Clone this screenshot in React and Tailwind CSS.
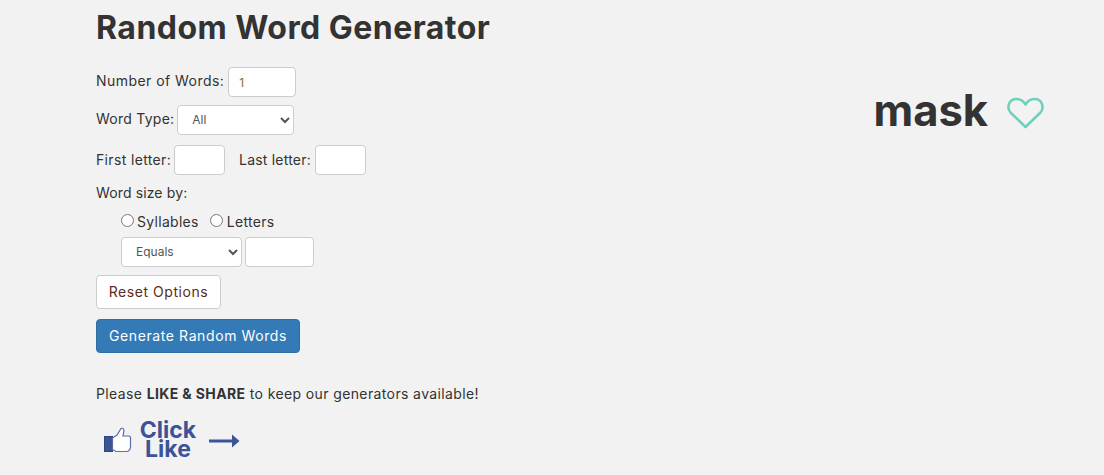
const font = "font-['Inter','Liberation_Sans',sans-serif]";
const field = "h-[30px] bg-white border border-[#ccc] rounded-[4px] text-[12px] text-[#555] outline-none";

function Thumb() {
  return (
    <svg width="28" height="26" viewBox="0 0 28 26">
      <rect x="0.5" y="9.5" width="8" height="15" fill="#3b5397" stroke="#2f4580" />
      <path d="M8.5 11 L13 8 L17 1.5 Q19.5 0.5 20 3.5 L19 9 L25 9 Q27 9.5 26.5 12 L26.5 20 Q26 24 23 24.5 L12 24.5 L8.5 22.5 Z" fill="#fff" stroke="#5b6ea8" strokeWidth="1.2" />
    </svg>
  );
}

export default function App() {
  return (
    <div className={`${font} h-[475px] overflow-hidden bg-[#f2f2f2] text-[#333] text-[14px] pl-[96px] pr-[60px] flex justify-between`}>
      <div className="flex flex-col items-start">
        <h1 className="mt-[11px] text-[32px] leading-[34px] font-bold tracking-[0.47px] text-[#333] whitespace-nowrap">Random Word Generator</h1>
        <div className="mt-[22px] flex items-center gap-[4px] h-[30px]">
          <span className="-translate-y-[2px] tracking-[0.45px]">Number of Words:</span>
          <input defaultValue="1" className={`${field} w-[68px] pl-[10px] !text-[#8a6d3b]`} />
        </div>
        <div className="mt-[8px] flex items-center gap-[3px] h-[30px]">
          <span className="-translate-y-[2px] tracking-[0.25px]">Word Type:</span>
          <select defaultValue="All" className={`${field} w-[117px] pl-[10px] pb-[2px]`}><option>All</option></select>
        </div>
        <div className="mt-[10px] flex items-center h-[30px]">
          <span className="-translate-y-[1px] tracking-[0.35px]">First letter:</span>
          <input className={`${field} w-[51px] ml-[3px]`} />
          <span className="ml-[14px] -translate-y-[1px] tracking-[0.2px]">Last letter:</span>
          <input className={`${field} w-[51px] ml-[4px]`} />
        </div>
        <div className="mt-[8px] leading-[20px] tracking-[0.13px]">Word size by:</div>
        <div className="mt-[8px] ml-[25px] flex items-center h-[20px] tracking-[0.3px]">
          <input type="radio" name="s" className="w-[13px] h-[13px] m-0 -translate-y-[1px]" />
          <span className="ml-[3px]">Syllables</span>
          <input type="radio" name="s" className="w-[13px] h-[13px] m-0 ml-[11px] -translate-y-[1px]" />
          <span className="ml-[4px]">Letters</span>
        </div>
        <div className="mt-[6px] ml-[25px] flex items-center gap-[3px]">
          <select defaultValue="Equals" className={`${field} w-[121px] pl-[10px] pb-[2px]`}><option>Equals</option></select>
          <input className={`${field} w-[69px]`} />
        </div>
        <button className="mt-[8px] h-[34px] w-[125px] bg-white border border-[#ccc] rounded-[4px] text-[#5c2a20] tracking-[0.55px] pb-[2px]">Reset Options</button>
        <button className="mt-[10px] h-[34px] w-[204px] bg-[#337ab7] border border-[#2e6da4] rounded-[4px] text-white tracking-[0.6px] pb-[2px]">Generate Random Words</button>
        <p className="mt-[31px] leading-[20px] tracking-[0.38px] whitespace-nowrap">Please <b className="font-bold">LIKE &amp; SHARE</b> to keep our generators available!</p>
        <div className="mt-[17px] ml-[8px] flex items-center text-[#3b5397]">
          <Thumb />
          <div className="ml-[7px] w-[58px] text-center text-[23px] leading-[19px] font-bold">Click<br />Like</div>
          <svg className="ml-[12px] mt-[1px]" width="31" height="16" viewBox="0 0 31 16">
            <path d="M0 6.5h23V9.5H0z M23 1.5 L30.5 8 L23 14.5 Z" fill="#3b5397" />
          </svg>
        </div>
      </div>
      <div className="mt-[87px] flex items-center h-[46px]">
        <span className="text-[43.5px] leading-[46px] font-bold text-[#333]">mask</span>
        <svg className="ml-[19px] mt-[6px]" width="37" height="32" viewBox="0 0 37 32" fill="none">
          <path d="M18.5 30 L3.5 15.5 C-0.5 11 1.5 2 9.5 2 C13.5 2 16.5 4 18.5 7.5 C20.5 4 23.5 2 27.5 2 C35.5 2 37.5 11 33.5 15.5 Z" stroke="#6fd1bd" strokeWidth="2.6" strokeLinejoin="round" />
        </svg>
      </div>
    </div>
  );
}
